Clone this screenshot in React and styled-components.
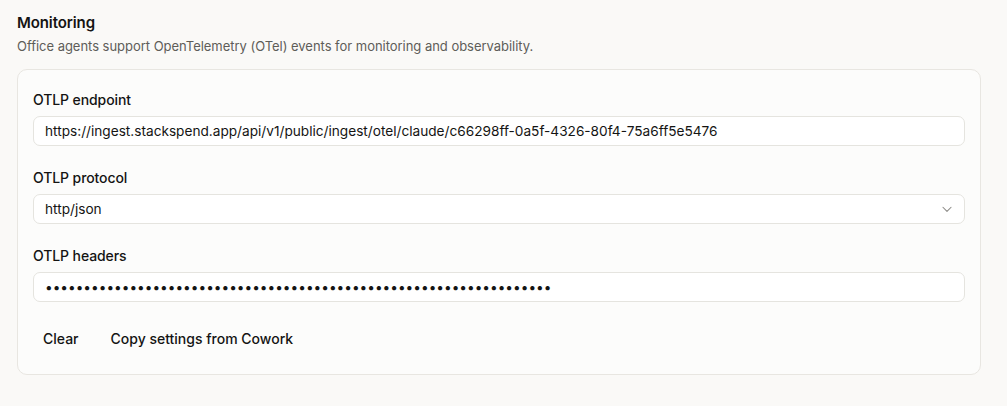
import React from 'react';
import styled, { createGlobalStyle } from 'styled-components';

const GlobalStyle = createGlobalStyle`
    html, body {
        margin:0;
        background:#faf9f7;
        font-family: Inter, "Noto Sans", sans-serif;
        color:#141413;
    }
`

const Page = styled.div`
    padding:13px 17px 0 17px;
    width:964px;
`
const Title = styled.h2`
    margin:0;
    font-size:15px;
    font-weight:600;
    line-height:20px;
    letter-spacing:-0.1px;
`
const Subtitle = styled.p`
    margin:3px 0 0 0;
    font-size:13px;
    line-height:20px;
    color:#5e5d59;
    letter-spacing:-0.03px;
`
const Card = styled.div`
    margin-top:13px;
    background:#fcfcfb;
    border:1px solid #e8e6e1;
    border-radius:10px;
    padding:20px 15px 20px 15px;
    display:flex;
    flex-direction:column;
    gap:22px;
`
const Field = styled.div`
    display:flex;
    flex-direction:column;
    gap:6px;
`
const Label = styled.label`
    font-size:14px;
    font-weight:500;
    line-height:20px;
    letter-spacing:-0.1px;
`
const InputBox = styled.div`
    position:relative;
    display:flex;
    align-items:center;
    height:30px;
    box-sizing:border-box;
    background:#fff;
    border:1px solid #e5e4df;
    border-radius:7px;
`
const TextInput = styled.input`
    flex:1;
    border:none;
    outline:none;
    background:transparent;
    font-family:inherit;
    font-size:13.65px;
    color:#141413;
    padding:0 11px;
    height:100%;
`
const Select = styled.select`
    flex:1;
    appearance:none;
    border:none;
    outline:none;
    background:transparent;
    font-family:inherit;
    font-size:13.65px;
    color:#141413;
    padding:0 11px;
    height:100%;
`
const Chevron = styled.svg`
    position:absolute;
    right:10px;
    top:50%;
    transform:translateY(-50%);
    pointer-events:none;
`
const Actions = styled.div`
    display:flex;
    gap:12px;
    margin-top:-2px;
`
const GhostButton = styled.button`
    height:32px;
    padding:0 10px;
    border:none;
    background:transparent;
    border-radius:7px;
    font-family:inherit;
    font-size:14px;
    font-weight:500;
    color:#141413;
    cursor:pointer;
    &:hover {
        background:#f0eee6;
    }
`

function App() {
    return (
        <>
            <GlobalStyle />
            <Page>
                <Title>Monitoring</Title>
                <Subtitle>Office agents support OpenTelemetry (OTel) events for monitoring and observability.</Subtitle>
                <Card>
                    <Field>
                        <Label>OTLP endpoint</Label>
                        <InputBox>
                            <TextInput
                                type="text"
                                defaultValue="https://ingest.stackspend.app/api/v1/public/ingest/otel/claude/c66298ff-0a5f-4326-80f4-75a6ff5e5476"
                            />
                        </InputBox>
                    </Field>
                    <Field>
                        <Label>OTLP protocol</Label>
                        <InputBox>
                            <Select defaultValue="http/json">
                                <option value="http/json">http/json</option>
                                <option value="http/protobuf">http/protobuf</option>
                                <option value="grpc">grpc</option>
                            </Select>
                            <Chevron width="14" height="14" viewBox="0 0 24 24" fill="none" stroke="#8a8985" strokeWidth="1.8" strokeLinecap="round" strokeLinejoin="round">
                                <path d="M5 9l7 7 7-7" />
                            </Chevron>
                        </InputBox>
                    </Field>
                    <Field>
                        <Label>OTLP headers</Label>
                        <InputBox>
                            <TextInput type="password" defaultValue={'x'.repeat(66)} />
                        </InputBox>
                    </Field>
                    <Actions>
                        <GhostButton>Clear</GhostButton>
                        <GhostButton>Copy settings from Cowork</GhostButton>
                    </Actions>
                </Card>
            </Page>
        </>
    )
}
export default App;
